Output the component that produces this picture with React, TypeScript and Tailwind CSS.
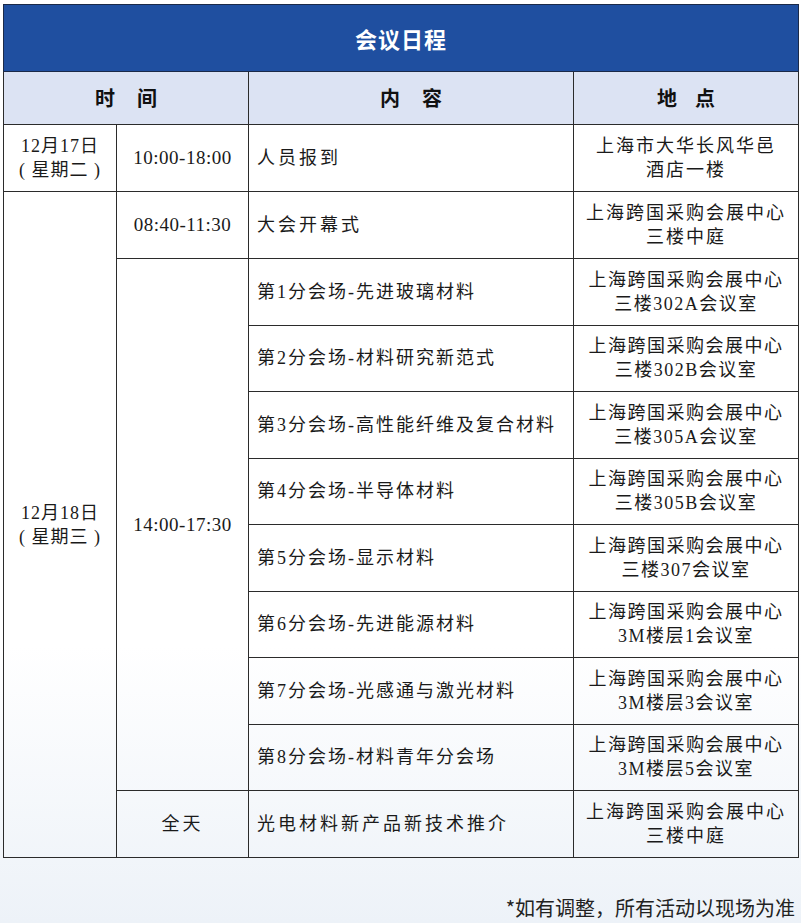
import React from "react";

const serif = { fontFamily: '"Liberation Serif", "Noto Sans CJK SC", serif' };

const sessions: [string, string][] = [
  ["第1分会场-先进玻璃材料", "三楼302A会议室"],
  ["第2分会场-材料研究新范式", "三楼302B会议室"],
  ["第3分会场-高性能纤维及复合材料", "三楼305A会议室"],
  ["第4分会场-半导体材料", "三楼305B会议室"],
  ["第5分会场-显示材料", "三楼307会议室"],
  ["第6分会场-先进能源材料", "3M楼层1会议室"],
  ["第7分会场-光感通与激光材料", "3M楼层3会议室"],
  ["第8分会场-材料青年分会场", "3M楼层5会议室"],
];

const td = "border-[1.5px] border-[#2b2b2b] text-[18px] text-[#1a1a1a] leading-[24px]";
const th = "border-[1.5px] border-[#2b2b2b] text-[20px] font-bold text-[#111]";
const place = "上海跨国采购会展中心";

export default function App() {
  return (
    <div
      className="w-[801px] h-[923px] bg-gradient-to-b from-white from-[70%] to-[#edf2f8] pt-[4px] pl-[3px]"
      style={serif}
    >
      <table className="w-[795px] border-collapse table-fixed">
        <colgroup>
          <col className="w-[113px]" />
          <col className="w-[132px]" />
          <col className="w-[325px]" />
          <col className="w-[225px]" />
        </colgroup>
        <thead>
          <tr className="h-[67px]">
            <th
              colSpan={4}
              className="bg-[#1f4fa0] border-[1.5px] border-[#1b2a48] text-white text-[22px] font-bold tracking-[1px]"
              style={{ fontFamily: '"Noto Sans CJK SC", sans-serif' }}
            >
              会议日程
            </th>
          </tr>
          <tr
            className="h-[53px] bg-[#dce3f3]"
            style={{ fontFamily: '"Noto Sans CJK SC", sans-serif' }}
          >
            <th colSpan={2} className={th}>
              时<span className="inline-block w-[22px]" />间
            </th>
            <th className={th}>
              内<span className="inline-block w-[22px]" />容
            </th>
            <th className={th}>
              地<span className="inline-block w-[18px]" />点
            </th>
          </tr>
        </thead>
        <tbody>
          <tr className="h-[67px]">
            <td className={`${td} text-center tracking-[1px]`}>
              12月17日
              <br />( 星期二 )
            </td>
            <td className={`${td} text-center text-[19px] tracking-[0.5px]`}>10:00-18:00</td>
            <td className={`${td} pl-[8px] tracking-[3px]`}>人员报到</td>
            <td className={`${td} text-center tracking-[2px]`}>
              上海市大华长风华邑
              <br />
              酒店一楼
            </td>
          </tr>
          <tr className="h-[67px]">
            <td rowSpan={11} className={`${td} text-center tracking-[1px]`}>
              12月18日
              <br />( 星期三 )
            </td>
            <td className={`${td} text-center text-[19px] tracking-[0.5px]`}>08:40-11:30</td>
            <td className={`${td} pl-[8px] tracking-[3px]`}>大会开幕式</td>
            <td className={`${td} text-center tracking-[2px]`}>
              {place}
              <br />
              三楼中庭
            </td>
          </tr>
          {sessions.map(([name, room], i) => (
            <tr key={name} className="h-[66.5px]">
              {i === 0 && (
                <td rowSpan={8} className={`${td} text-center text-[19px] tracking-[0.5px]`}>
                  14:00-17:30
                </td>
              )}
              <td className={`${td} pl-[8px] tracking-[2px]`}>{name}</td>
              <td className={`${td} text-center tracking-[1.5px]`}>
                {place}
                <br />
                {room}
              </td>
            </tr>
          ))}
          <tr className="h-[67px]">
            <td className={`${td} text-center tracking-[3px]`}>全天</td>
            <td className={`${td} pl-[8px] tracking-[3px]`}>光电材料新产品新技术推介</td>
            <td className={`${td} text-center tracking-[2px]`}>
              {place}
              <br />
              三楼中庭
            </td>
          </tr>
        </tbody>
      </table>
      <div
        className="mt-[35px] pr-[6px] text-right text-[20px] text-[#222]"
        style={{ fontFamily: '"Noto Sans CJK SC", sans-serif' }}
      >
        *如有调整，所有活动以现场为准
      </div>
    </div>
  );
}
